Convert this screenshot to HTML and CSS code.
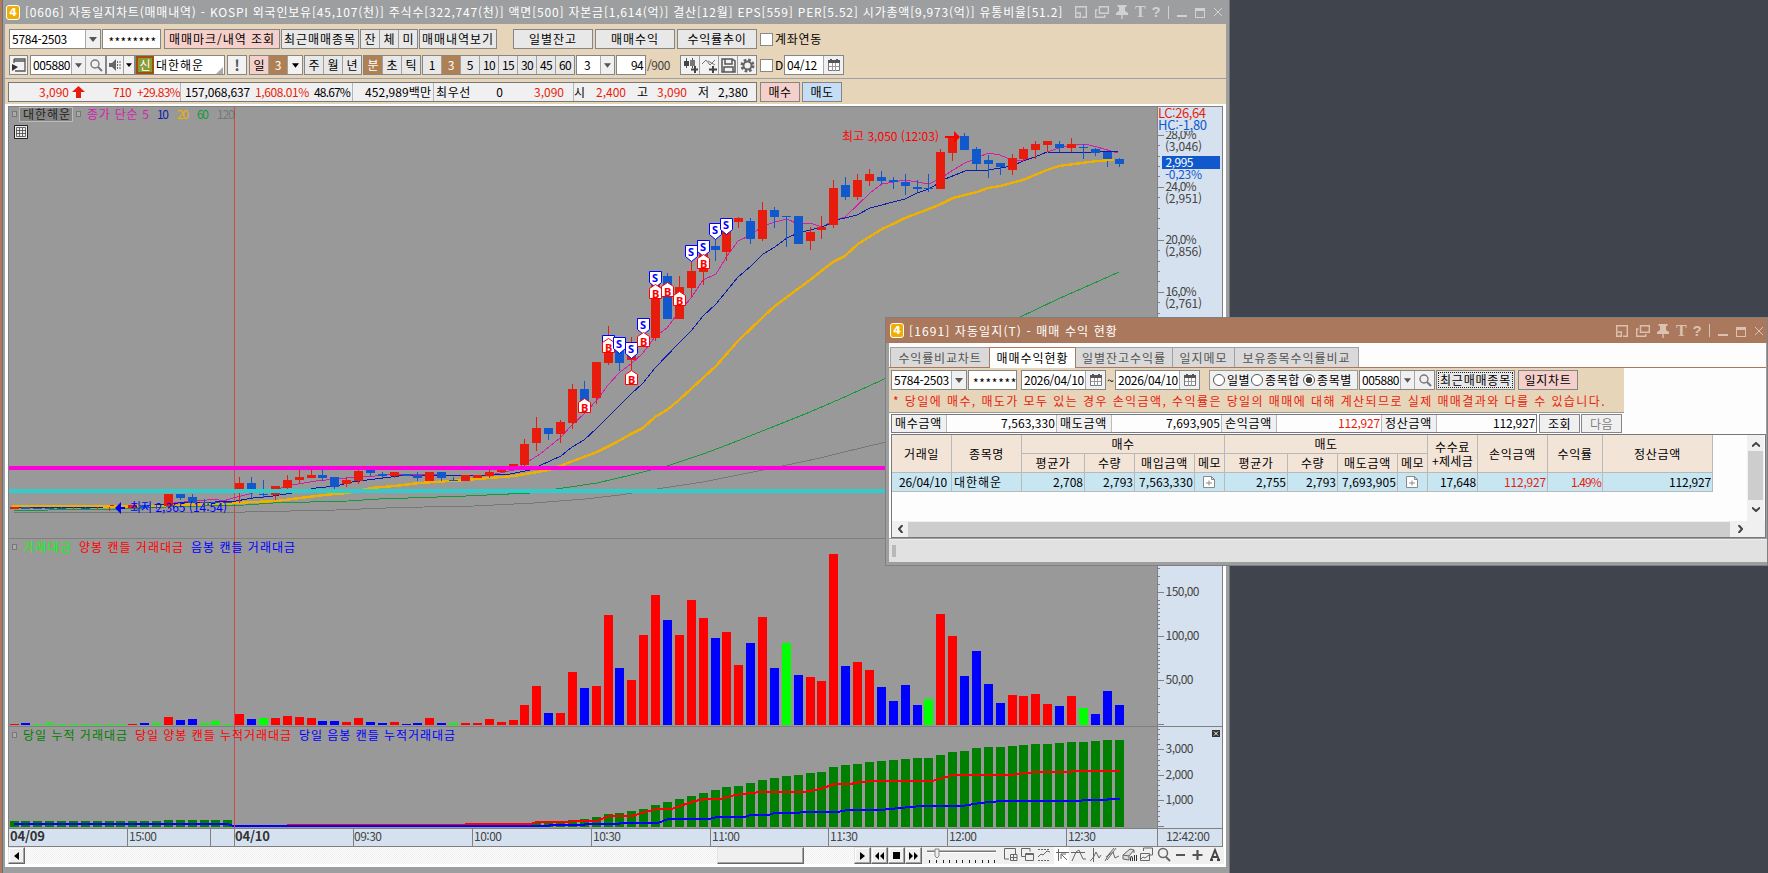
FILE: index.html
```
<!DOCTYPE html>
<html lang="ko">
<head>
<meta charset="utf-8">
<title>자동일지차트</title>
<link rel="stylesheet" href="styles.css">
</head>
<body>
<svg class="defs" width="0" height="0">
  <symbol id="i-tile" viewBox="0 0 12 12"><path d="M.7 6V.7h10.6v10.6H7M.7 7h4.6v4.3H.7z" fill="none" stroke="currentColor" stroke-width="1.4"/></symbol>
  <symbol id="i-copy" viewBox="0 0 14 12"><path d="M4.5.7h8.8v6.6H4.5zM2.5 4H.7v7.3h9V9" fill="none" stroke="currentColor" stroke-width="1.4"/></symbol>
  <symbol id="i-pin" viewBox="0 0 12 14"><path d="M1.500 0h9v2H9v4l3 2v2H6.700v4H5.300v-4H0V8l3-2V2H1.500z" fill="currentColor"/></symbol>
  <symbol id="i-search" viewBox="0 0 14 14"><circle cx="6" cy="6" r="4" fill="none" stroke="currentColor" stroke-width="1.4"/><path d="M9 9l4 4" stroke="currentColor" stroke-width="2"/></symbol>
  <symbol id="i-down" viewBox="0 0 8 5"><path d="M0 0h8L4 5z" fill="currentColor"/></symbol>
  <symbol id="i-cal" viewBox="0 0 12 12"><path d="M.5 1.500h11v10H.5z" fill="#fff" stroke="#777"/><path d="M0 1h12v3H0zM2 0h2v2H2zM8 0h2v2H8z" fill="#555"/><path d="M4.500 4v8M7.500 4v8M1 7.500h10" stroke="#999"/></symbol>
  <symbol id="i-memo" viewBox="0 0 12 12"><path d="M.5.5h8l3 3v8H.5zM8.500.5v3h3M3 7h6M6 4.500v5" fill="#fff" stroke="#8a8a8a"/></symbol>
</svg>

<section class="main">
  <header class="title">
    <b class="logo">4</b>
    <span class="t" data-w="1038">[0606] 자동일지차트(매매내역) - KOSPI 외국인보유[45,107(천)] 주식수[322,747(천)] 액면[500] 자본금[1,614(억)] 결산[12월] EPS[559] PER[5.52] 시가총액[9,973(억)] 유통비율[51.2]</span>
    <span class="winbtns">
      <svg width="12" height="12"><use href="#i-tile"/></svg><svg width="14" height="12"><use href="#i-copy"/></svg><svg class="pin" width="12" height="14"><use href="#i-pin"/></svg><em>T</em><em class="q">?</em><i class="bar"></i><i class="min"></i><i class="max"></i><svg width="10" height="10"><path d="M1 1l8 8M9 1l-8 8" stroke="currentColor"/></svg>
    </span>
  </header>

  <div class="tools">
    <div class="row">
      <div class="box w92"><span class="t" data-w="55">5784-2503</span><i class="dd"><svg width="8" height="5"><use href="#i-down"/></svg></i></div>
      <div class="box w59 m1 c"><span class="t stars" data-w="48">********</span></div>
      <button class="pink w116 m3"><span class="t" data-w="106">매매마크/내역 조회</span></button>
      <button class="w78 m1"><span class="t" data-w="72">최근매매종목</span></button>
      <div class="seg m1"><button>잔</button><button>체</button><button>미</button></div>
      <button class="w78 m1"><span class="t" data-w="72">매매내역보기</span></button>
      <button class="w80 m16"><span class="t" data-w="48">일별잔고</span></button>
      <button class="w80 m2"><span class="t" data-w="48">매매수익</span></button>
      <button class="w80 m2"><span class="t" data-w="59">수익률추이</span></button>
      <i class="check m3"></i><span class="t m2" data-w="47">계좌연동</span>
    </div>
    <div class="row r2">
      <button class="lite w19"><svg width="15" height="14"><path d="M3 1h11v12H4M3 3h11M3 1v4" fill="none" stroke="#555" stroke-width="1.300"/><path d="M1 6l6 3-6 4z" fill="#333"/></svg></button>
      <div class="box w76 m2"><span class="t" data-w="37">005880</span><i class="dd d13"><svg width="7" height="5"><use href="#i-down"/></svg></i><i class="dd d19"><svg class="gr" width="14" height="14"><use href="#i-search"/></svg></i></div>
      <div class="seg lite m0"><button class="w16"><svg width="12" height="12"><path d="M0 4h3l4-4v12L3 8H0z" fill="#666"/><path d="M8.500 2v8M11 2v8" stroke="#666" stroke-dasharray="2 1"/></svg></button><button class="w12"><svg width="6" height="4"><use href="#i-down"/></svg></button></div>
      <div class="box w90 name"><b>신</b><span class="t" data-w="48">대한해운</span><i class="corner"></i></div>
      <button class="lite w20 m2"><strong>!</strong></button>
      <div class="seg m2"><button class="pink">일</button><button class="brown">3</button><button class="lite w15"><svg width="7" height="5"><use href="#i-down"/></svg></button></div>
      <div class="seg m1"><button>주</button><button>월</button><button>년</button></div>
      <div class="seg m1"><button class="brown">분</button><button>초</button><button>틱</button></div>
      <div class="seg m1"><button>1</button><button class="brown">3</button><button>5</button><button><span class="t" data-w="12">10</span></button><button><span class="t" data-w="12">15</span></button><button><span class="t" data-w="12">30</span></button><button><span class="t" data-w="12">45</span></button><button><span class="t" data-w="12">60</span></button></div>
      <div class="box w39 m1"><span class="three">3</span><i class="dd d13"><svg width="7" height="5"><use href="#i-down"/></svg></i></div>
      <div class="box w30 m1 r"><span class="t" data-w="12">94</span></div>
      <span class="t m1 dim" data-w="23">/900</span>
      <div class="seg lite m10 four">
        <button><svg width="15" height="15"><path d="M3.500 0v10M9.500 0v10" stroke="#555"/><path d="M1 3h5v5H1z" fill="#444"/><path d="M7 2h5v6H7z" fill="#777"/><path d="M12 8v7M8 11.500h7" stroke="#444" stroke-width="2"/></svg></button>
        <button><svg width="15" height="15"><path d="M0 6l4-4 4 5 5-5M6 3l7 4" fill="none" stroke="#777"/><path d="M11 8v7M7 11.500h8" stroke="#444" stroke-width="2"/></svg></button>
        <button><svg width="15" height="15"><path d="M1 1h10l3 2v11H1zM4 1v5h7V1M3 14V9h9v5" fill="none" stroke="#555" stroke-width="1.500"/></svg></button>
        <button><svg width="15" height="15"><circle cx="7.500" cy="7.500" r="5.500" fill="none" stroke="#666" stroke-width="3" stroke-dasharray="2.500 1.820"/><circle cx="7.500" cy="7.500" r="4" fill="none" stroke="#666" stroke-width="2"/></svg></button>
      </div>
      <i class="check m3"></i><span class="dlabel">D</span>
      <div class="box w60 m1"><span class="t" data-w="30">04/12</span><i class="dd d19"><svg width="12" height="12"><use href="#i-cal"/></svg></i></div>
    </div>
    <div class="row r3">
      <div class="quote">
        <span class="red r"><span class="t" data-w="30">3,090</span></span><svg width="13" height="12"><path d="M6.500 0L13 6H9v6H4V6H0z" fill="#e81c0c"/></svg><span class="red r"><span class="t" data-w="18">710</span></span><span class="red r"><span class="t" data-w="43">+29.83%</span></span><i></i>
        <span class="r"><span class="t" data-w="65">157,068,637</span></span><span class="red r"><span class="t" data-w="54">1,608.01%</span></span><span class="r"><span class="t" data-w="36">48.67%</span></span><i></i>
        <span class="r"><span class="t" data-w="66">452,989백만</span></span><i></i>
        <span class="r"><span class="t" data-w="35">최우선</span></span><span class="r">0</span><span class="red r"><span class="t" data-w="30">3,090</span></span><i></i>
        <span>시</span><span class="red r"><span class="t" data-w="30">2,400</span></span><span class="r">고</span><span class="red r"><span class="t" data-w="30">3,090</span></span><span class="r">저</span><span class="r"><span class="t" data-w="30">2,380</span></span>
      </div>
      <button class="pink w40 m3"><span class="t" data-w="23">매수</span></button>
      <button class="sky w40 m2"><span class="t" data-w="23">매도</span></button>
    </div>
  </div>

  <div class="chart"><svg id="chart" width="1218" height="743" viewBox="7 104 1218 743"></svg></div>

  <footer class="scroll">
    <button class="raise"><svg width="5" height="8"><path d="M5 0v8L0 4z"/></svg></button>
    <div class="track"><i class="thumb"></i></div>
    <button class="raise"><svg width="5" height="8"><path d="M0 0v8l5-4z"/></svg></button>
    <button class="raise"><svg width="9" height="8"><path d="M4 0v8L0 4zM9 0v8L5 4z"/></svg></button>
    <button class="raise"><svg width="7" height="7"><path d="M0 0h7v7H0z"/></svg></button>
    <button class="raise"><svg width="9" height="8"><path d="M0 0v8l4-4zM5 0v8l4-4z"/></svg></button>
    <svg class="icons" width="302" height="17" viewBox="922 848 302 17" fill="none" stroke="#666">
      <path d="M927 852.500h69" stroke="#777" stroke-width="2"/><path d="M927 853.500h69" stroke="#fff"/><path d="M935 850h4v7l-2 2-2-2z" fill="#eee" stroke="#888"/>
      <path d="M929.500 861v3M936.500 861v3M943.500 861v3M949.500 861v3M956.500 861v3M962.500 861v3M969.500 861v3M975.500 861v3M982.500 861v3M988.500 861v3M994.500 861v3" stroke="#222"/>
      <path d="M1009 860h-4.500v-10.500h11V855M1010.500 855.500h6.500v6h-6.500zM1013.500 855v7M1010 858.500h7"/>
      <path d="M1026 857.500h-4.500v-8h8.500v3"/><path d="M1025.500 854.500h8v7h-8zM1025 855.500h9" />
      <path d="M1038 850.500h12M1038 861.500h12" stroke-dasharray="2 1"/><path d="M1038 858l3-3 2 1 4-4 3 1"/>
      <path d="M1054 848h15v17h-15z" fill="#fff" stroke="none"/><path d="M1056 853.500h13M1058.500 850v12M1061 855l6 6M1061 860v-5h5"/>
      <path d="M1071 853.500h14M1072 862l4-9 3-2 4 9h3"/>
      <path d="M1093.500 849v14M1090 862l3-3 3-6 3 6 2-3"/>
      <path d="M1105 862l4-7 5-6M1106 858l7-5 2 6 4-2M1107 861l9-12" />
      <path d="M1123 856l7-6 4 1-5 6zM1123 856v4l6 1v-4M1134 851v3" fill="#ddd"/><path d="M1130.500 862v-3l1-2 1 2v3M1134.500 856v6M1136.500 856v6" stroke="#333"/>
      <path d="M1143.500 852v-3h9v7h-3M1140.500 854.500h9v7h-9zM1141 860l2-2 2 1 4-3"/>
      <circle cx="1163" cy="854" r="4.500" stroke-width="1.500"/><path d="M1166 858l4 4" stroke-width="2"/>
      <path d="M1176 856h9M1192.500 856h10M1197.500 851v10" stroke="#555" stroke-width="2.200"/>
      <path d="M1211 861l4-10 4 10M1212.500 858h5M1210 861h3M1217 861h3" stroke="#444" stroke-width="1.900"/>
    </svg>
  </footer>
</section>

<section class="pop">
  <header class="title">
    <b class="logo">4</b><span class="t" data-w="209">[1691] 자동일지(T) - 매매 수익 현황</span>
    <span class="winbtns">
      <svg width="12" height="12"><use href="#i-tile"/></svg><svg width="14" height="12"><use href="#i-copy"/></svg><svg class="pin" width="12" height="14"><use href="#i-pin"/></svg><em>T</em><em class="q">?</em><i class="bar"></i><i class="min"></i><i class="max"></i><svg width="10" height="10"><path d="M1 1l8 8M9 1l-8 8" stroke="currentColor"/></svg>
    </span>
  </header>
  <div class="body">
    <nav><a class="w99"><span class="t" data-w="83">수익률비교차트</span></a><a class="w87 on"><span class="t" data-w="72">매매수익현황</span></a><a class="w97"><span class="t" data-w="84">일별잔고수익률</span></a><a class="w62"><span class="t" data-w="48">일지메모</span></a><a class="w124"><span class="t" data-w="108">보유종목수익률비교</span></a></nav>
    <div class="filter">
      <div class="row">
        <div class="box w76"><span class="t" data-w="55">5784-2503</span><i class="dd"><svg width="8" height="5"><use href="#i-down"/></svg></i></div>
        <div class="box w49 m1"><span class="t stars" data-w="44">*******</span></div>
        <div class="box w85 m4"><span class="t" data-w="60">2026/04/10</span><i class="dd d19"><svg width="12" height="12"><use href="#i-cal"/></svg></i></div>
        <span class="tilde">~</span>
        <div class="box w85"><span class="t" data-w="60">2026/04/10</span><i class="dd d19"><svg width="12" height="12"><use href="#i-cal"/></svg></i></div>
        <div class="radios m9"><i></i><span class="t" data-w="23">일별</span><i></i><span class="t" data-w="35">종목합</span><i class="sel"></i><span class="t" data-w="35">종목별</span></div>
        <div class="box w76 m1"><span class="t" data-w="37">005880</span><i class="dd d13"><svg width="7" height="5"><use href="#i-down"/></svg></i><i class="dd d19"><svg class="gr" width="14" height="14"><use href="#i-search"/></svg></i></div>
        <button class="w79 m1 focus"><span class="t" data-w="71">최근매매종목</span></button>
        <button class="pink w60 m3"><span class="t" data-w="47">일지차트</span></button>
      </div>
      <p><span class="t" data-w="713">* 당일에 매수, 매도가 모두 있는 경우 손익금액, 수익률은 당일의 매매에 대해 계산되므로 실제 매매결과와 다를 수 있습니다.</span></p>
    </div>
    <div class="sums">
      <div class="sumbox">
        <b><span class="t" data-w="47">매수금액</span></b><span><span class="t" data-w="54">7,563,330</span></span>
        <b><span class="t" data-w="47">매도금액</span></b><span><span class="t" data-w="54">7,693,905</span></span>
        <b><span class="t" data-w="47">손익금액</span></b><span class="red"><span class="t" data-w="42">112,927</span></span>
        <b><span class="t" data-w="47">정산금액</span></b><span><span class="t" data-w="42">112,927</span></span>
      </div>
      <button class="w41 m2"><span class="t" data-w="23">조회</span></button><button class="w41 m1 off"><span class="t" data-w="23">다음</span></button>
    </div>
    <div class="tablebox">
      <div class="view">
        <div class="grid">
          <b class="tall c1"><span class="t" data-w="35">거래일</span></b><b class="tall c2"><span class="t" data-w="35">종목명</span></b><b class="wide c3"><span class="t" data-w="23">매수</span></b><b class="wide c7"><span class="t" data-w="23">매도</span></b><b class="tall two c11"><span class="t" data-w="35">수수료</span><span class="t" data-w="41">+제세금</span></b><b class="tall c12"><span class="t" data-w="47">손익금액</span></b><b class="tall c13"><span class="t" data-w="35">수익률</span></b><b class="tall c14"><span class="t" data-w="47">정산금액</span></b>
          <b><span class="t" data-w="35">평균가</span></b><b><span class="t" data-w="23">수량</span></b><b><span class="t" data-w="47">매입금액</span></b><b><span class="t" data-w="23">메모</span></b><b><span class="t" data-w="35">평균가</span></b><b><span class="t" data-w="23">수량</span></b><b><span class="t" data-w="47">매도금액</span></b><b><span class="t" data-w="23">메모</span></b>
          <span><span class="t" data-w="48">26/04/10</span></span><span class="l"><span class="t" data-w="48">대한해운</span></span><span><span class="t" data-w="30">2,708</span></span><span><span class="t" data-w="30">2,793</span></span><span><span class="t" data-w="54">7,563,330</span></span><span class="mid"><svg width="12" height="12"><use href="#i-memo"/></svg></span><span><span class="t" data-w="30">2,755</span></span><span><span class="t" data-w="30">2,793</span></span><span><span class="t" data-w="54">7,693,905</span></span><span class="mid"><svg width="12" height="12"><use href="#i-memo"/></svg></span><span><span class="t" data-w="36">17,648</span></span><span class="red"><span class="t" data-w="42">112,927</span></span><span class="red"><span class="t" data-w="30">1.49%</span></span><span><span class="t" data-w="42">112,927</span></span>
        </div>
        <div class="vbar"><svg width="8" height="5"><path d="M0 4.500L4 1l4 3.500" /></svg><i></i><svg width="8" height="5"><path d="M0 .5L4 4l4-3.500"/></svg></div>
      </div>
      <div class="hbar"><svg width="5" height="8"><path d="M4.500 0L1 4l3.500 4"/></svg><i></i><svg width="5" height="8"><path d="M.5 0L4 4 .5 8"/></svg></div>
    </div>
  </div>
  <div class="status"><i></i></div>
</section>
<script src="chart.js"></script>
</body>
</html>
```
FILE: styles.css
```
* { box-sizing: border-box; }
body { margin: 0; width: 1768px; height: 873px; overflow: hidden; background: #40444c; font: 12px/16px "Noto Sans CJK KR", "Noto Sans", sans-serif; color: #000; position: relative; }
.defs { position: absolute; }
svg { display: block; flex: none; }
.t { display: inline-block; white-space: nowrap; flex: none; }
.red, .red .t { color: #e81c0c; }
button { font: inherit; padding: 0; height: 20px; border: 1px solid #85868a; background: #e8e8e8; display: flex; align-items: center; justify-content: center; color: #000; flex: none; white-space: nowrap; }
.pink { background: #f5cfca; }
.sky { background: #c5def5; }
.brown { background: #b08055; color: #fff; }
.lite, .lite button { background: #f2f2f2; }
.m0 { margin-left: 0; } .m1 { margin-left: 1px; } .m2 { margin-left: 2px; } .m3 { margin-left: 3px; } .m4 { margin-left: 4px; }
.m9 { margin-left: 9px; } .m10 { margin-left: 10px; } .m16 { margin-left: 16px; }

.main { width: 1230px; height: 873px; display: flex; flex-direction: column; background: #9c9ea0; border-left: 2px solid #ad7a5e; border-right: 1px solid #777; padding: 0 3px 5px; box-shadow: inset 1px 0 #6e7174; }
.title { display: flex; align-items: center; color: #fff; }
.main .title { height: 24px; flex: none; }
.logo { width: 14px; height: 15px; border: 1px solid #fff; border-radius: 3px; background: #f0ae00; font: bold 11px/13px "DejaVu Sans", sans-serif; text-align: center; margin-right: 5px; flex: none; }
.main .logo { margin-left: 1px; }
.winbtns { margin-left: auto; display: flex; align-items: center; color: #cfd1d3; }
.winbtns > * { flex: none; }
.winbtns svg + svg { margin-left: 8px; }
.winbtns svg + .pin { margin-left: 7px; }
.winbtns em { font: bold 16px/16px "Liberation Serif", serif; margin-left: 7px; width: 10px; text-align: center; }
.winbtns .q { font: bold 15px/16px "Liberation Sans", sans-serif; margin-left: 6px; }
.winbtns .bar { width: 1px; height: 13px; background: currentColor; margin-left: 7px; }
.winbtns .min { width: 10px; height: 2px; background: currentColor; margin: 8px 0 0 8px; }
.winbtns .max { width: 10px; height: 10px; border: 1px solid; border-top-width: 3px; margin: 2px 8px 0 8px; }
.main .winbtns { margin-right: 3px; }

.tools { height: 80px; flex: none; background: #e7d5ba; padding-top: 5px; }
.row { display: flex; align-items: center; height: 20px; padding-left: 4px; }
.r2 { margin-top: 6px; }
.r3 { margin-top: 3px; padding-left: 3px; border-top: 1px solid #9fa0a2; height: 26px; padding-top: 0; }
.box { height: 20px; border: 1px solid #85868a; background: #fff; display: flex; align-items: center; padding-left: 2px; overflow: hidden; flex: none; }
.c { justify-content: center; }
.box.r { justify-content: flex-end; padding-right: 2px; }
.dd { width: 15px; height: 18px; background: #f0f0f0; border-left: 1px solid #a9a9a9; margin-left: auto; display: flex; align-items: center; justify-content: center; color: #555; flex: none; }
.dd + .dd { margin-left: 0; }
.d13 { width: 14px; } .d19 { width: 20px; }
.gr { color: #777; }
.w12 { width: 12px; } .w15 { width: 15px; } .w16 { width: 16px; } .w19 { width: 19px; } .w20 { width: 20px; } .w30 { width: 30px; } .w39 { width: 39px; } .w40 { width: 40px; } .w41 { width: 41px; } .w49 { width: 49px; }
.w59 { width: 59px; } .w60 { width: 60px; } .w62 { width: 62px; } .w76 { width: 76px; } .w78 { width: 78px; } .w79 { width: 79px; } .w80 { width: 80px; } .w85 { width: 85px; } .w87 { width: 87px; } .w90 { width: 90px; } .w92 { width: 92px; } .w97 { width: 97px; } .w99 { width: 99px; } .w116 { width: 116px; } .w124 { width: 124px; }
.seg { display: flex; border: 1px solid #85868a; height: 20px; flex: none; }
.seg button { width: 19px; height: 18px; border: 0; border-left: 1px solid #a0a0a0; }
.seg button:first-child { border-left: 0; width: 18px; }
.seg button.w15 { width: 15px; } .seg button.w16 { width: 16px; } .seg button.w12 { width: 11px; }
.check { width: 13px; height: 13px; background: #fff; border: 1px solid #888; flex: none; }
.name { padding: 0; }
.name b { width: 18px; height: 18px; background: #8a9a35; border: 2px solid #a04e0c; color: #fff; font-weight: 400; line-height: 14px; text-align: center; margin-right: 2px; overflow: hidden; }
.corner { margin: 10px 1px 0 auto; border: solid transparent; border-width: 7px 7px 0 0; border-right-color: #aaa; }
strong { font-size: 15px; color: #555; }
.three { margin-left: 5px; }
.dlabel { width: 8px; margin-left: 2px; }
.dim { color: #444; }
.quote { height: 20px; width: 749px; border: 1px solid #77787c; background: #f0f0f0; display: grid; grid-template-columns: 60px 16px 46px 49px 1px 69px 59px 41px 3px 78px 3px 37px 32px 61px 10px 14px 38px 22px 39px 22px 39px; align-items: center; flex: none; }
.quote svg { justify-self: end; }
.quote .r { text-align: right; }
.quote i { height: 18px; border-right: 1px solid #b5b5b5; }

.chart { height: 743px; flex: none; background: #fff; padding-left: 2px; overflow: hidden; }
.chart text { font: 12px "Noto Sans CJK KR", "Noto Sans", sans-serif; }
.chart text.b { font-weight: 700; font-size: 13px; }
.chart text.mk { font: 700 11px "Noto Sans", sans-serif; }
.chart text.big { font-size: 13px; }

.scroll { height: 20px; flex: none; display: flex; background: #fff; padding: 0 1px 0 3px; }
.raise { width: 17px; height: 17px; border: 1px solid; border-color: #e5e5e5 #666 #666 #e5e5e5; background: #f0f0f0; box-shadow: inset -1px -1px #a5a5a5, inset 1px 1px #fff; }
.track { width: 829px; height: 17px; background: repeating-conic-gradient(#fff 0 25%, #eee 0 50%) 0 0 / 2px 2px; padding-left: 692px; flex: none; }
.thumb { display: block; width: 87px; height: 17px; background: #f0f0f0; border: 1px solid; border-color: #e5e5e5 #666 #666 #e5e5e5; box-shadow: inset -1px -1px #a5a5a5; }
.icons { background: #f0f0f0; }

.pop { position: absolute; left: 885px; top: 317px; width: 883px; height: 249px; background: #9c9ea0; border: 1px solid #808080; padding: 0 0 3px 3px; }
.pop .title { background: #aa785c; height: 25px; margin-left: -3px; padding: 0 3px 0 4px; color: #fff; }
.pop .winbtns { color: #dcc0b0; }
.body { background: #fdfdfe; height: 195px; padding-top: 4px; margin-right: 1px; }
nav { display: flex; height: 21px; border-bottom: 1px solid #aa785c; padding-left: 1px; }
nav a { background: #d9d9d9; border: 1px solid #a0a0a0; border-bottom: 0; border-left-width: 0; height: 20px; display: flex; align-items: center; justify-content: center; color: #555; }
nav a.on { background: #fff; border-color: #aa785c; border-left-width: 1px; height: 21px; color: #000; }
nav a:first-child { border-right: 0; border-left-width: 1px; }
.filter { width: 735px; background: #e7d5ba; height: 45px; border-bottom: 1px solid #999; padding-top: 2px; }
.filter .row { padding-left: 2px; }
.filter p { margin: 3px 0 0 4px; color: #e81c0c; }
.stars { padding-top: 5px; }
.filter .stars { margin-left: 2px; }
.tilde { width: 9px; text-align: center; }
.radios { width: 149px; height: 20px; border: 1px solid #999; background: #f0f0f0; display: flex; align-items: center; padding-left: 3px; flex: none; }
.radios i { width: 12px; height: 12px; border: 1px solid #555; border-radius: 50%; background: #fff; margin: 0 2px 0 1px; flex: none; }
.radios i:first-child { margin-left: 0; }
.radios i.sel { background: radial-gradient(circle, #444 0 3px, #fff 3.500px); margin-left: 3px; }
.focus { outline: 1px dotted #222; outline-offset: -3px; }
.sums { display: flex; padding: 1px 0 0 2px; height: 21px; }
.sums button { height: 19px; background: #f0f0f0; }
.sums .off { color: #808080; }
.sumbox { width: 646px; height: 19px; border: 1px solid #77787c; display: grid; grid-template-columns: 55px 110px 55px 110px 55px 105px 55px 99px; grid-template-rows: 17px; line-height: 16px; }
.sumbox b { font-weight: 400; background: #f0f0f0; border-right: 1px solid #bbb; padding-left: 3px; }
.sumbox > span { text-align: right; border-right: 1px solid #bbb; padding-right: 1px; }
.sumbox > span:last-child { border-right: 0; }
.tablebox { margin: 0 0 0 2px; width: 875px; height: 104px; border: 1px solid #77787c; }
.view { display: flex; justify-content: space-between; height: 86px; }
.grid { display: grid; grid-template-columns: 60px 70px 63px 50px 60px 30px 63px 50px 60px 30px 50px 70px 55px 110px; grid-template-rows: 19px 19px 19px; }
.grid > * { border-right: 1px solid #b9b9b9; border-bottom: 1px solid #b9b9b9; display: flex; align-items: center; justify-content: center; font-weight: 400; }
.grid b { background: #f3e4d8; }
.grid > span { background: #c8e6f2; justify-content: flex-end; padding-right: 1px; }
.grid > span:nth-of-type(1) { padding-right: 4px; }
.grid > .l { justify-content: flex-start; padding-left: 2px; }
.grid > .mid { justify-content: center; }
.grid .tall { grid-row: 1 / 3; }
.grid .c1 { grid-column: 1; } .grid .c2 { grid-column: 2; } .grid .c11 { grid-column: 11; } .grid .c12 { grid-column: 12; } .grid .c13 { grid-column: 13; } .grid .c14 { grid-column: 14; }
.grid .wide { grid-row: 1; }
.grid .c3 { grid-column: 3 / 7; } .grid .c7 { grid-column: 7 / 11; }
.grid .two { flex-direction: column; line-height: 14px; }
.vbar { width: 17px; background: #f0f0f0; display: flex; flex-direction: column; align-items: center; padding: 7px 0 9px; margin-right: 1px; }
.vbar i { width: 15px; height: 51px; background: #cdcdcd; margin: 4px 0 7px; }
.vbar path, .hbar path { fill: none; stroke: #444; stroke-width: 2; }
.hbar { height: 16px; background: #f0f0f0; display: flex; align-items: center; padding-left: 6px; }
.hbar i { width: 822px; height: 15px; background: #cdcdcd; margin: 0 8px 0 5px; }
.status { height: 23px; margin-top: 1px; background: #e1e1e1; padding: 5px 0 0 3px; border-top: 1px solid #eee; }
.status i { display: block; width: 4px; height: 12px; background: radial-gradient(circle, #888 .6px, transparent .8px) 0 0 / 2px 2px; }
```
FILE: chart.js
```
// Fixed-pitch spacing for interface text.
document.querySelectorAll('.t').forEach(function (el) {
  var w = el.getBoundingClientRect().width, n = el.textContent.length;
  el.style.letterSpacing = ((el.dataset.w - w) / n).toFixed(3) + 'px';
});

var out = [];
function rect(x, y, w, h, f) { out.push('<rect x="' + x + '" y="' + y + '" width="' + w + '" height="' + h + '" fill="' + f + '"/>'); }
function line(p, c, w, crisp) { out.push('<polyline points="' + p + '" fill="none" stroke="' + c + '" stroke-width="' + w + '"' + (crisp ? ' shape-rendering="crispEdges"' : '') + '/>'); }
function text(x, y, s, c, w, k) { out.push('<text x="' + x + '" y="' + y + '" fill="' + c + '"' + (w ? ' textLength="' + w + '"' : '') + (k ? ' class="' + k + '"' : '') + '>' + s + '</text>'); }
function bx(i) { return Math.floor(10 + i * 1105 / 93); }

var RED = '#e81c0c', BLUE = '#1058cc', G = '#808080', PALE = '#d6e1ef';

rect(8, 106, 1215, 741, G);
rect(9, 107, 1148, 721, '#999');
rect(1158, 107, 64, 721, PALE);
rect(9, 829, 1213, 17, PALE);
rect(9, 538, 1148, 1, G); rect(9, 726, 1214, 1, G);

// Traded value: r, b or g followed by bar height.
var vol = 'r1 b2 g1 g2 g1 g1 g1 g1 g1 g1 r1 b2 g2 r8 b5 b6 g2 g4 g1 r11 b6 g7 r7 r9 r8 r7 b4 b4 r3 r7 b3 b2 r3 b1 b2 r7 b2 g2 r2 r2 r6 r3 r5 r20 r39 b12 r12 r53 b37 r39 r110 b57 r45 r90 r130 b105 r90 r125 r107 b87 r93 r60 b82 r108 b57 g82 b50 r48 r44 r171 b59 r63 r55 b38 b24 b40 b20 g26 r111 r89 b49 b74 b41 b22 r30 r29 r31 r21 b19 r29 g17 b11 b34 b20'.split(' ');
vol.forEach(function (v, i) {
  var h = +v.slice(1);
  rect(bx(i), 725 - h, 9, h, { r: '#f00', b: '#00f', g: '#0f0' }[v[0]]);
});

// Accumulated value for the day.
var cum = [6,6,6,6,6,6,6,6,6,6,6,6,6,7,7,7,7,7,7,0,0,0,0,0,0,0,0,0,0,0,0,0,0,0,0,0,0,0,0,0,1,1,2,3,4,5,6,7,8,10,13,14,16,18,22,25,28,31,34,37,40,41,44,47,49,51,52,54,55,60,62,63,65,66,67,68,69,69,72,75,76,79,80,80,81,82,83,83,84,85,85,86,87,87];
cum.forEach(function (h, i) { if (h) rect(bx(i), 827 - h, 9, h, '#008000'); });
line('235,826 287,826 288,825 465,825 466,824 530,824 537,822 570,822 573,821 597,821 608,816.500 632,816 645,812 657,809 672,809 680,806 695,801 705,799 720,799 735,795 760,792 803,792 820,789 835,784 850,784 860,782 875,781 932,781 953,775 1010,775 1035,772 1070,772 1073,771 1120,771', '#f00', 2, 1);
line('14,824 228,824 233,826 549,826 550,825 584,825 585,824 619,824 620,823 658,823 668,819 709,819 717,817 745,817 750,815 768,815 775,813 798,813 802,812 838,812 847,810 880,810 900,808 922,806 962,806 980,803 1002,801 1058,801 1107,800 1108,799 1120,799', '#00f', 2, 1);

rect(234, 107, 1, 721, '#d04848');

// Candles: colour, body top, body bottom, high, low.
var candles = 'r507 509 505 509|b507 509 505 509|b508 509 508 509|b508 509 505 509|b508 509 505 509|r505 506 505 509|b508 509 505 509|r505 506 505 509|r505 506 505 511|b507 508 505 508|r505 508 505 509|b505 508 505 509|b507 508 505 509|r494 506 494 509|b494 498 494 500|b497 503 494 503|b502 503 499 503|b502 503 502 503|b502 503 502 503|r483 491 477 503|b483 490 477 498|b494 495 480 498|r486 495 486 500|r480 488 475 489|r477 480 470 484|r475 478 470 478|b475 478 470 481|b477 487 477 489|r480 484 477 487|r471 481 470 484|b470 473 470 476|b474 476 472 478|r472 476 472 478|b474 476 474 476|b475 478 472 481|r472 481 472 481|b472 478 472 481|b480 481 477 481|r475 481 475 481|r475 478 475 478|r472 476 469 478|r470 472 470 472|r464 467 464 467|r444 465 439 466|r428 443 417 451|b428 434 428 440|r422 434 420 443|r389 423 384 429|b389 403 381 403|r362 398 362 404|r345 363 326 365|b340 363 340 371|r350 360 337 370|r336 342 336 342|r283 338 280 341|b276 319 273 319|r287 319 276 319|r271 288 262 297|r253 272 253 285|b246 250 238 261|r230 252 230 261|r218 222 217 228|b221 239 218 244|r210 239 202 241|b210 217 207 228|b216 217 216 247|b216 244 216 244|r232 241 227 250|r227 230 216 239|r188 225 180 228|b185 197 177 200|r180 197 174 200|r174 181 169 186|b177 181 171 185|b180 182 177 189|b182 186 174 195|b187 189 180 192|b188 189 174 192|r152 189 149 189|r136 153 136 161|b136 150 133 150|b149 164 147 170|b160 164 155 178|b163 167 163 175|r158 170 154 175|r149 159 147 161|r144 150 141 159|r141 145 141 152|b144 148 141 152|r144 148 138 152|b147 148 144 159|b149 153 148 156|b152 160 152 167|b159 164 158 167'.split('|');

// Moving averages.
line('14,506 120,508 165,504 178,502.500 213,499.500 225,500.500 233,498 253,493 273,490 292,485 316,481 336,479 356,477 375,476 395,474 419,474 443,475 486,476 514,470 529,461 540,454 560,438 572,425 585,413 597,400 608,385 620,372 631,364 643,353 655,337 667,328 679,312 691,298 703,280 716,274 727,256 738,241 751,235 763,226 775,222 787,219 798,224 810,223 822,227 833,221 845,217 870,193 882,184 905,180 917,182 929,184 941,178 953,170 965,163 977,158 988,153 1000,155 1012,160 1023,160 1035,157 1047,152 1059,148 1072,145 1085,144 1097,147 1118,153', '#d41cae', 1, 1);
line('14,507 120,508 178,503 233,501.500 253,498 273,496 292,493 316,488 336,486 352,482 375,479 399,476 435,475.500 474,475.500 510,474 530,470 541,465 561,456 572,447 584,440 597,428 615,410 631,394 643,383 655,368 679,343 691,331 703,316 716,304 738,277 751,266 763,254 775,247 787,238 798,233 810,230 822,227 840,219 845,218 857,215 870,208 905,199 917,193 929,189 945,179 965,171 988,170 1012,166 1023,161 1035,157 1047,152 1087,152.500 1103,151 1118,151', '#0c1ea8', 1, 1);
line('12,506 158,506.500 170,505 221,504 253,502 277,501 300,498 324,495 348,493 371,488 395,486 419,483 466,480 514,476 549,470 563,465 573,461 597,452 615,443 631,434 643,428 655,417 667,410 679,400 691,389 716,366 738,341 763,317 775,306 787,297 810,280 825,268 833,262 845,256 858,244 882,229 893,224 905,218 929,209 941,204 953,198 977,192 988,188 1000,186 1023,180 1047,170 1059,166 1097,161 1113,160', '#f0b000', 2.4, 1);
line('14,510.500 119,509 166,507 245,505 273,503 348,501 379,499 466,496 530,493 563,488 597,483 631,475 667,466 703,454 727,445 775,426 810,412 840,399 880,381 1020,317 1035,310 1058,299 1083,288 1119,272', '#149a3c', 1, 1);
line('14,512.500 245,512 336,510 399,507.500 474,506 534,503 585,499 620,495 663,488 703,482 763,470 787,465 820,458 840,453 886,442', '#777', 1, 1);
candles.forEach(function (s, i) {
  var c = s[0] === 'r' ? RED : BLUE, v = s.slice(1).split(' ').map(Number), x = bx(i);
  rect(x + 4, v[2], 1, v[3] - v[2], c);
  rect(x, v[0], 9, v[1] - v[0], c);
});
line('12,506 110,506.500', '#f0b000', 2, 1);
line('1103,160 1114,160', '#f0b000', 2, 1);
rect(9, 466, 876, 4, '#f0d');
rect(9, 489, 876, 4, '#3cc');

// Trade marks: side, centre x, top y.
function mark(k, x, y) {
  var s = k !== 'B', c = s ? '#00f' : '#f00';
  var p = s ? 'M' + (x - 6) + ' ' + y + 'h12v11l-6 5-6-5z' : 'M' + x + ' ' + y + 'l6 4v10h-12v-10z';
  out.push('<path d="' + p + '" fill="#fff" stroke="' + c + '"/>');
  if (k) text(x - 3.5, s ? y + 10.5 : y + 13, k, c, 0, 'mk');
}
[['B',584.5,398.5],['',608.5,335.5],['B',608.5,338.5],['S',619.5,337.5],['S',631.5,342.5],['B',631.5,370.5],['S',643.5,318.5],['B',643.5,332.5],['S',655.5,271.5],['B',655.5,284.5],['B',667.5,282.5],['B',679.5,291.5],['S',691.5,245.5],['S',703.5,240.5],['B',703.5,254.5],['S',715.5,223.5],['S',726.5,218.5]].forEach(function (m) { mark(m[0], m[1], m[2]); });

text(842, 141, '최고 3,050 (12:03)', '#f00', 97);
out.push('<path d="M945 136h9v-5l6 6-6 6v-5h-9z" fill="#f00"/>');
text(130, 512, '최저 2,365 (14:54)', '#00f', 97);
out.push('<path d="M125 507h-4v-5l-6 6 6 6v-5h4z" fill="#00f"/>');

// Legends.
function tick(x, y) { out.push('<rect x="' + (x + .5) + '" y="' + (y + .5) + '" width="4" height="5" fill="#aaa" stroke="#777"/>'); }
tick(12, 111); tick(76, 111);
out.push('<rect x="19.500" y="107.500" width="53" height="14" fill="#858585" stroke="#bbb"/>');
text(23, 119, '대한해운', '#222', 47);
text(87, 119, '종가 단순 5', '#d41cae', 62);
text(157, 119, '10', '#0c1ea8', 12); text(177, 119, '20', '#f0b000', 12); text(197, 119, '60', '#149a3c', 12); text(217, 119, '120', '#777', 18);
out.push('<path d="M14.500 125.500h13v13h-13z" fill="#eee" stroke="#222"/><path d="M16.500 127.500h9v9h-9zM16 130.500h10M16 133.500h10M19.500 128v9M22.500 128v9" fill="none" stroke="#444" stroke-width=".8"/>');
tick(12, 544);
text(23, 552, '거래대금', '#0f0', 48); text(79, 552, '양봉 캔들 거래대금', '#f00', 104); text(191, 552, '음봉 캔들 거래대금', '#00f', 104);
tick(12, 732);
text(23, 740, '당일 누적 거래대금', '#008000', 104); text(135, 740, '당일 양봉 캔들 누적거래대금', '#f00', 156); text(299, 740, '당일 음봉 캔들 누적거래대금', '#00f', 156);

// Value axis.
var D = '#444';
[135,187,240,292].forEach(function (y) { rect(1158, y, 6, 1, G); for (var j = 1; j < 5; j++) rect(1158, Math.round(y + j * 10.3), 2, 1, G); });
[[592,'150,00',34],[636,'100,00',34],[680,'50,00',28]].forEach(function (a) {
  rect(1158, a[0], 6, 1, G); for (var j = -4; j < 5; j++) rect(1158, a[0] + j * 8, 2, 1, G);
  text(1165.5, a[0] + 4, a[1], D, a[2]);
});
rect(1158, 724, 6, 1, G);
[[749,'3,000'],[775,'2,000'],[800,'1,000'],[826,'']].forEach(function (a) {
  rect(1158, a[0], 6, 1, G); for (var j = 1; j < 5; j++) rect(1158, a[0] - j * 5, 2, 1, G);
  if (a[1]) text(1165.5, a[0] + 4, a[1], D, 28);
});
text(1165.5, 139, '28,0%', D, 31);
rect(1158, 107, 64, 24, PALE);
text(1158, 118, 'LC:26,64', RED, 48, 'big'); text(1158, 130, 'HC:-1,80', BLUE, 49, 'big');
text(1165, 151, '(3,046)', D, 37);
rect(1162, 156, 58, 13, BLUE); text(1165.5, 167, '2,995', '#fff', 28);
text(1165, 179, '-0,23%', BLUE, 37);
text(1165.5, 191, '24,0%', D, 31); text(1165, 203, '(2,951)', D, 37);
text(1165.5, 244, '20,0%', D, 31); text(1165, 256, '(2,856)', D, 37);
text(1165.5, 296, '16,0%', D, 31); text(1165, 308, '(2,761)', D, 37);
rect(1212, 730, 8, 7, '#333'); out.push('<path d="M1214 731.500l4 4M1218 731.500l-4 4" stroke="#fff"/>');

// Time axis.
[127, 210, 234, 353, 472, 591, 710, 828, 947, 1066, 1157].forEach(function (x) { rect(x, 829, 1, 17, G); });
text(10, 841, '04/09', '#333', 35, 'b'); text(235, 841, '04/10', '#333', 35, 'b');
[[129,'15:00'],[354,'09:30'],[474,'10:00'],[593,'10:30'],[712,'11:00'],[830,'11:30'],[949,'12:00'],[1068,'12:30']].forEach(function (a) { text(a[0], 841, a[1], D, 28); });
text(1166, 841, '12:42:00', D, 44);

document.getElementById('chart').innerHTML = out.join('');
```
